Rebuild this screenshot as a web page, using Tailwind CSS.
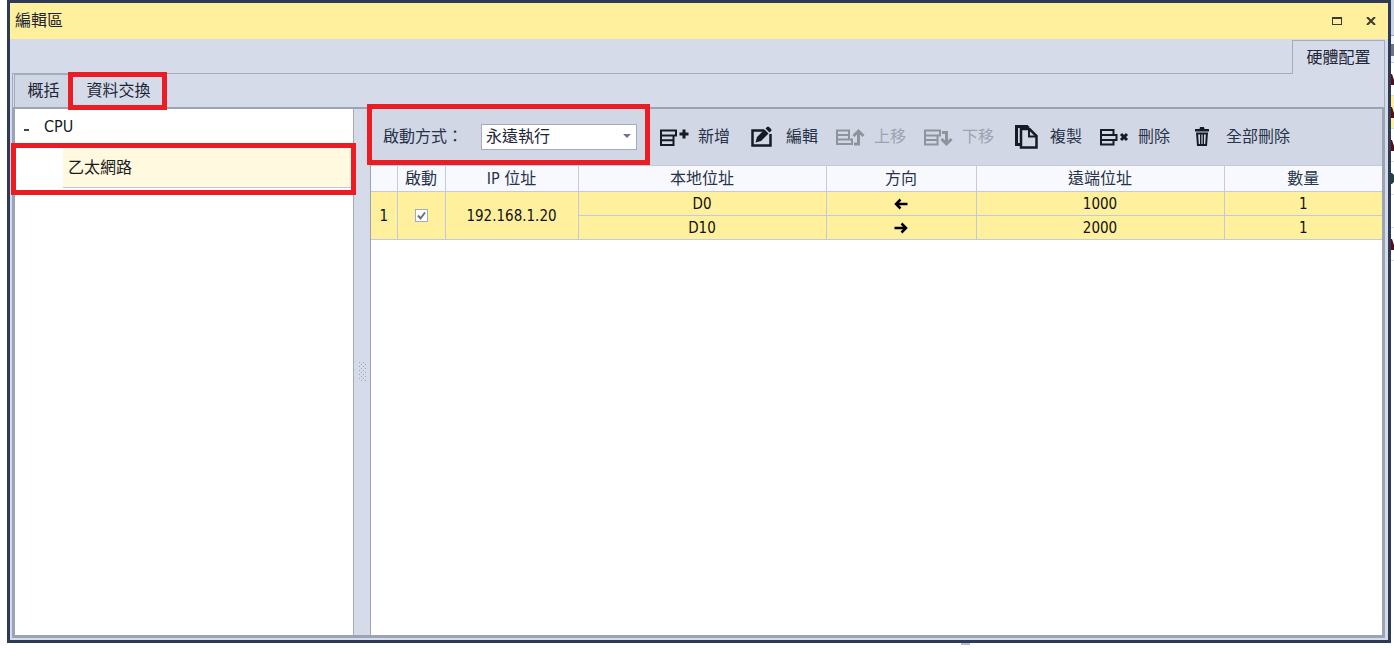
<!DOCTYPE html>
<html lang="zh-Hant">
<head>
    <meta charset="UTF-8">
    <meta name="viewport" content="width=device-width, initial-scale=1.0">
    <title>編輯區</title>
    <script src="https://cdn.jsdelivr.net/npm/@tailwindcss/browser@4"></script>
</head>
<body class="h-screen flex overflow-hidden bg-white text-[#1e2536] text-base font-['DejaVu_Sans_Condensed','Noto_Sans_CJK_TC',sans-serif]">
    <div class="relative flex-1 min-w-0 flex flex-col ml-[7px] mb-[5px] border-[3px] border-[#2d3b57] bg-[#d6dbe9]">
        <!-- Title bar -->
        <header class="h-9 shrink-0 flex items-center justify-between bg-[#fff09d] pl-[5px] pr-[11px]">
            <h1 class="leading-6">編輯區</h1>
            <div class="flex items-center gap-[22px]">
                <button type="button" aria-label="最大化" class="w-3 h-4 flex items-center justify-center">
                    <svg class="w-[10px] h-2" viewBox="0 0 10 8"><path d="M0 0h10v8H0zM1 2v5h8V2z" fill="#3c3a2c" fill-rule="evenodd"/></svg>
                </button>
                <button type="button" aria-label="關閉" class="w-3 h-4 flex items-center justify-center">
                    <svg class="w-[10px] h-2" viewBox="0 0 10 8"><path d="M1 0l8 8M9 0L1 8" stroke="#3c3a2c" stroke-width="2"/></svg>
                </button>
            </div>
        </header>

        <!-- Outer tab -->
        <div class="h-[35px] shrink-0 flex pl-[2px] pr-[3px] pt-px">
            <div class="flex-1 border-b border-[#a3acbf]"></div>
            <button type="button" class="w-[93px] border border-b-0 border-[#a3acbf] leading-6">硬體配置</button>
        </div>

        <!-- Inner tabs -->
        <nav class="h-[33px] shrink-0 flex ml-[2px] mr-[3px] border-x border-[#a3acbf] pl-px">
            <button type="button" class="w-[54px] pl-1 border-t border-l border-[#a3acbf] bg-[#cfd6e4] leading-6">概括</button>
            <div class="relative w-[99px] flex">
                <button type="button" class="flex-1 pl-[2px] leading-6">資料交換</button>
                <div class="absolute inset-x-0 -top-[2px] -bottom-[3px] z-10 border-[5px] border-[#eb1c24] pointer-events-none"></div>
            </div>
        </nav>

        <main class="flex-1 min-h-0 flex ml-[2px] mr-[3px] mb-[2px] border-[3px] border-t-2 border-[#9ba4b5]">
            <!-- Device tree -->
            <aside class="w-[339px] shrink-0 bg-white border-r border-[#a3acbf] leading-6 text-[#1a1a1a]">
                <div class="h-9 flex items-center pl-[9px]">
                    <button type="button" aria-label="收合" class="w-5 h-6 flex items-center pt-[6px]"><span class="w-[5px] h-[2px] bg-[#444]"></span></button>
                    CPU
                </div>
                <div class="relative h-[43px] pl-12 pt-[3px]">
                    <div class="h-10 flex items-center bg-[#fff9e0] border-b border-[#c8c8d0] pl-[5px]">乙太網路</div>
                    <div class="absolute -left-1 -right-[3px] -top-[2px] -bottom-[7px] z-10 border-[5px] border-[#eb1c24] pointer-events-none"></div>
                </div>
            </aside>

            <!-- Splitter -->
            <div class="w-4 shrink-0 flex items-center justify-center bg-[#d6dbe9]">
                <svg class="w-[7px] h-5" viewBox="0 0 7 20" fill="#a0a8ba">
                    <path d="M0 0h1v1H0zM4 0h1v1H4zM2 2h1v1H2zM6 2h1v1H6zM0 4h1v1H0zM4 4h1v1H4zM2 6h1v1H2zM6 6h1v1H6zM0 8h1v1H0zM4 8h1v1H4zM2 10h1v1H2zM6 10h1v1H6zM0 12h1v1H0zM4 12h1v1H4zM2 14h1v1H2zM6 14h1v1H6zM0 16h1v1H0zM4 16h1v1H4zM2 18h1v1H2zM6 18h1v1H6z"/>
                </svg>
            </div>

            <section class="flex-1 min-w-0 border-l border-[#9ba4b5] bg-white">
                <!-- Toolbar -->
                <div class="h-14 flex items-center bg-[#d1d7e5] text-[#283249] leading-6">
                    <div class="relative h-full w-[279px] shrink-0 flex items-center justify-between pl-3 pr-[13px]">
                        <label for="startMode">啟動方式：</label>
                        <div class="relative">
                            <select id="startMode" class="block appearance-none w-[156px] h-[26px] pl-1 border border-[#a3acbf] bg-white text-[#1e2536] leading-6">
                                <option>永遠執行</option>
                            </select>
                            <svg class="absolute right-[6px] top-[10px] w-2 h-1 pointer-events-none" viewBox="0 0 8 4"><path d="M0 0h8L4 4z" fill="#6d7687"/></svg>
                        </div>
                        <div class="absolute -left-1 right-0 -top-[5px] bottom-0 z-10 border-[5px] border-[#eb1c24] pointer-events-none"></div>
                    </div>
                    <div class="flex items-center gap-4 pl-2 whitespace-nowrap">
                        <button type="button" class="flex items-center gap-2">
                            <svg class="w-8 h-6" viewBox="0 0 32 24" fill="none" stroke="#141c26" stroke-width="2">
                                <path d="M3 5.500h15v5H3zM3 5v15h12.500v-9M3 15.200h12.500"/><path d="M26 4.500v9M21.500 9h9" stroke-width="3"/>
                            </svg>
                            新增
                        </button>
                        <button type="button" class="flex items-center gap-2">
                            <svg class="w-8 h-6" viewBox="0 0 32 24" fill="none" stroke="#141c26">
                                <path d="M18 5.500H6.500v15h18V9" stroke-width="2.500"/>
                                <path d="M9.500 17.500l1.500-5.500 7.500-7.500 4 4-7.500 7.500zM19.500 3.500l1.500-1.500q1-1 2 0l2 2q1 1 0 2l-1.500 1.500z" fill="#141c26" stroke="none"/>
                            </svg>
                            編輯
                        </button>
                        <button type="button" disabled class="flex items-center gap-2 text-[#9ca4b3]">
                            <svg class="w-8 h-6" viewBox="0 0 32 24" fill="none" stroke="#8e939d" stroke-width="2">
                                <path d="M3 5.500h12v9H3zM3 10h12M3 5v14h15v-4.500h-4"/><path d="M24.500 6v13H20" stroke-width="3"/><path d="M19.500 11l5-5 5 5" stroke-width="3"/>
                            </svg>
                            上移
                        </button>
                        <button type="button" disabled class="flex items-center gap-2 text-[#9ca4b3]">
                            <svg class="w-8 h-6" viewBox="0 0 32 24" fill="none" stroke="#8e939d" stroke-width="2">
                                <path d="M3 5.500h15v5H3zM3 5v14.500h12.500V11M3 15h12.500"/><path d="M20 7.500h4.500v11" stroke-width="3"/><path d="M19.500 14l5 5 5-5" stroke-width="3"/>
                            </svg>
                            下移
                        </button>
                        <button type="button" class="flex items-center gap-2">
                            <svg class="w-8 h-6" viewBox="0 0 32 24" fill="none" stroke="#141c26" stroke-width="2">
                                <path d="M10 19.500H6.500V1.500H17l1.500 1.500" stroke-width="3"/><path d="M11 4h8.500l7 7v11.500H11z" stroke-width="2.500"/><path d="M19 4v7.500h7.500"/>
                            </svg>
                            複製
                        </button>
                        <button type="button" class="flex items-center gap-2">
                            <svg class="w-8 h-6" viewBox="0 0 32 24" fill="none" stroke="#141c26" stroke-width="2">
                                <path d="M15.500 10V5H3v14.500h12.500V15M3 10h15.500v5H3z"/><path d="M23 9l6 6M29 9l-6 6" stroke-width="3"/>
                            </svg>
                            刪除
                        </button>
                        <button type="button" class="flex items-center gap-2">
                            <svg class="w-8 h-6" viewBox="0 0 32 24" fill="#141c26">
                                <path d="M9 4h4.500l.5-2h4l.5 2H23v2.500H9zM10 7.500h12L21 21H11zM12.200 9.500l.6 9.500h1.200V9.500zM15.400 9.500V19h1.200V9.500zM18 9.500V19h1.200l.6-9.500z" fill-rule="evenodd"/>
                            </svg>
                            全部刪除
                        </button>
                    </div>
                </div>

                <!-- Exchange table -->
                <table class="w-full table-fixed border-collapse text-center text-[15px] leading-5 text-[#111]">
                    <colgroup>
                        <col class="w-[26px]"><col class="w-12"><col class="w-[133px]"><col><col class="w-[150px]"><col><col class="w-[158px]">
                    </colgroup>
                    <thead>
                        <tr class="h-[26px] bg-[#f7f9fe] text-base text-[#283249]">
                            <th class="border border-l-0 border-[#c3cbdb] p-0"></th>
                            <th class="border border-[#c3cbdb] p-0 font-normal leading-5">啟動</th>
                            <th class="border border-[#c3cbdb] p-0 font-normal leading-5">IP 位址</th>
                            <th class="border border-[#c3cbdb] p-0 font-normal leading-5">本地位址</th>
                            <th class="border border-[#c3cbdb] p-0 font-normal leading-5">方向</th>
                            <th class="border border-[#c3cbdb] p-0 font-normal leading-5">遠端位址</th>
                            <th class="border border-r-0 border-[#c3cbdb] p-0 font-normal leading-5">數量</th>
                        </tr>
                    </thead>
                    <tbody class="bg-[#fff09d]">
                        <tr class="h-6">
                            <td rowspan="2" class="border border-l-0 border-[#c3cbdb] p-0">1</td>
                            <td rowspan="2" class="border border-[#c3cbdb] p-0">
                                <label class="relative block w-[13px] h-[13px] mx-auto">
                                    <input type="checkbox" checked aria-label="啟動" class="block appearance-none w-[13px] h-[13px] border border-[#a3acbf] bg-white">
                                    <svg class="absolute inset-0 w-[13px] h-[13px] pointer-events-none" viewBox="0 0 13 13"><path d="M3 6.500l2.500 3L10 3.500" fill="none" stroke="#6a6f7c" stroke-width="2"/></svg>
                                </label>
                            </td>
                            <td rowspan="2" class="border border-[#c3cbdb] p-0">192.168.1.20</td>
                            <td class="border border-[#c3cbdb] p-0">D0</td>
                            <td class="border border-[#c3cbdb] p-0">
                                <svg class="block mx-auto w-[14px] h-3" role="img" aria-label="向左" viewBox="0 0 14 12"><path d="M13.500 6H2M6.500 1.500L2 6l4.500 4.500" fill="none" stroke="#000" stroke-width="2.500"/></svg>
                            </td>
                            <td class="border border-[#c3cbdb] p-0">1000</td>
                            <td class="border border-r-0 border-[#c3cbdb] p-0">1</td>
                        </tr>
                        <tr class="h-6">
                            <td class="border border-[#c3cbdb] p-0">D10</td>
                            <td class="border border-[#c3cbdb] p-0">
                                <svg class="block mx-auto w-[14px] h-3" role="img" aria-label="向右" viewBox="0 0 14 12"><path d="M.5 6H12M7.500 1.500L12 6l-4.500 4.500" fill="none" stroke="#000" stroke-width="2.500"/></svg>
                            </td>
                            <td class="border border-[#c3cbdb] p-0">2000</td>
                            <td class="border border-r-0 border-[#c3cbdb] p-0">1</td>
                        </tr>
                    </tbody>
                </table>
            </section>
        </main>

        <!-- Splitter stub under the window -->
        <div class="absolute -bottom-[5px] left-[69%] w-[9px] h-[2px] bg-[#b4bad0]"></div>
    </div>

    <!-- Edge of the window behind -->
    <div aria-hidden="true" class="w-[3px] shrink-0 overflow-hidden bg-white">
        <div class="h-9 bg-[#ccd4e8] border-b border-[#9ba4b5]"></div>
        <div class="h-[27px] pt-2 bg-[#f0f3fa] border-b border-[#c3cbdb]"><div class="h-3 bg-[#6c7486]"></div></div>
        <svg class="block w-[3px] h-[198px]" viewBox="0 0 3 198">
            <path d="M0 33h3v33H0z" fill="#fff09d"/>
            <path d="M0 32h3v1H0zM0 65h3v1H0zM0 98h3v1H0zM0 131h3v1H0zM0 164h3v1H0zM0 197h3v1H0z" fill="#d6dbe9"/>
            <path d="M0 11h1l2 6v5H0zM0 44h1l2 6v5H0zM0 77h1l2 6v5H0zM0 176h1l2 6v5H0z" fill="#5a0d14"/>
            <path d="M0 110h1l2 2v7l-2 2H0z" fill="#23423a"/>
        </svg>
    </div>
</body>
</html>
